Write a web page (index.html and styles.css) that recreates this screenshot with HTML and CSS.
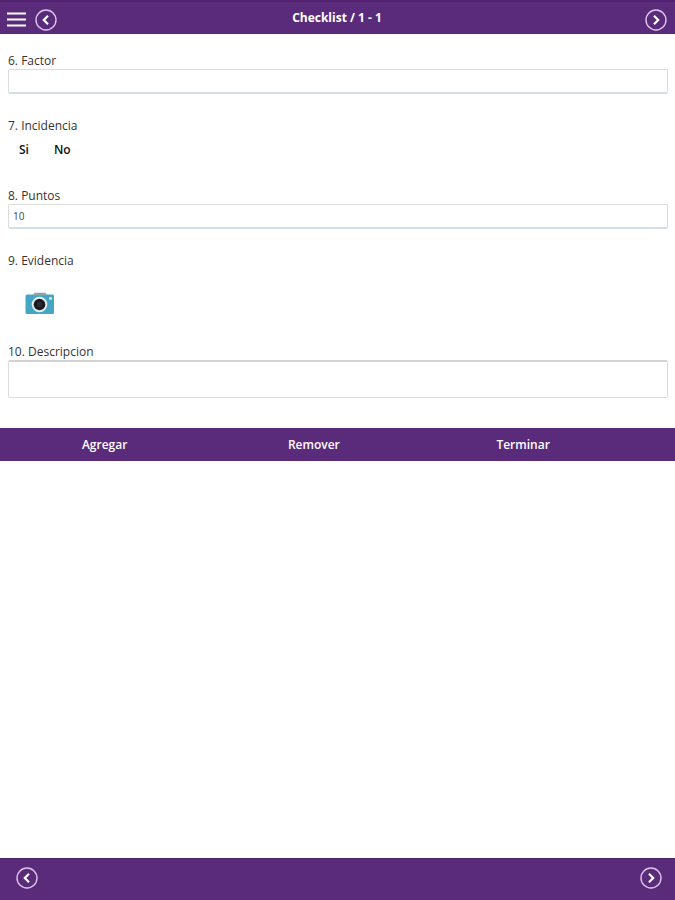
FILE: index.html
```html
<!DOCTYPE html>
<html lang="es">
<head>
  <meta charset="UTF-8">
  <meta name="viewport" content="width=device-width, initial-scale=1.0">
  <title>Checklist</title>
  <link rel="stylesheet" href="styles.css">
</head>
<body>
  <header class="topbar">
    <div class="topbar-side">
      <button type="button" class="icon-btn" aria-label="Menu">
        <svg width="20" height="22" viewBox="0 0 20 22"><path d="M0 4.5h19M0 10.5h19M0 16.5h19" stroke="#fff" stroke-width="2"/></svg>
      </button>
      <button type="button" class="icon-btn" aria-label="Anterior">
        <svg width="22" height="22" viewBox="0 0 22 22" fill="none"><circle cx="11" cy="11" r="10" stroke="#dcc4ea" stroke-width="1.4"/><path d="M13 6.8L8.8 11l4.2 4.2" stroke="#fff" stroke-width="2.2"/></svg>
      </button>
    </div>
    <h1>Checklist / 1 - 1</h1>
    <div class="topbar-side right">
      <button type="button" class="icon-btn" aria-label="Siguiente">
        <svg width="22" height="22" viewBox="0 0 22 22" fill="none"><circle cx="11" cy="11" r="10" stroke="#dcc4ea" stroke-width="1.4"/><path d="M9 6.8l4.2 4.2L9 15.2" stroke="#fff" stroke-width="2.2"/></svg>
      </button>
    </div>
  </header>

  <main>
    <form class="checklist">
      <div class="field">
        <label for="factor">6. Factor</label>
        <input type="text" id="factor">
      </div>

      <div class="field" role="group" aria-labelledby="incidencia">
        <span class="label" id="incidencia">7. Incidencia</span>
        <div class="options">
          <button type="button">Si</button>
          <button type="button">No</button>
        </div>
      </div>

      <div class="field">
        <label for="puntos">8. Puntos</label>
        <input type="text" id="puntos" value="10">
      </div>

      <div class="field" role="group" aria-labelledby="evidencia">
        <span class="label" id="evidencia">9. Evidencia</span>
        <div class="evidence">
          <button type="button" class="icon-btn" aria-label="Tomar foto">
            <svg width="30" height="23" viewBox="0 0 30 23">
              <path d="M8 4l1.5-3.2h11L22 4z" fill="#8ca39f"/>
              <rect x="0.5" y="2.5" width="28.5" height="19.5" rx="1.5" fill="#45a5c4"/>
              <path d="M9 2.5h12" stroke="#8ca39f" stroke-width="2"/>
              <circle cx="14.5" cy="12.5" r="7.8" fill="#e6eef0"/>
              <circle cx="14.5" cy="12.5" r="5.8" fill="#1c1a20"/>
              <circle cx="14.5" cy="12.5" r="2.6" fill="#2e2a30"/>
              <circle cx="25.5" cy="6.5" r="1.4" fill="#e6f4f8"/>
            </svg>
          </button>
        </div>
      </div>

      <div class="field">
        <label for="descripcion">10. Descripcion</label>
        <textarea id="descripcion"></textarea>
      </div>
    </form>

    <div class="actions">
      <button type="button">Agregar</button>
      <button type="button">Remover</button>
      <button type="button">Terminar</button>
    </div>
  </main>

  <footer class="bottombar">
    <button type="button" class="icon-btn" aria-label="Anterior">
      <svg width="22" height="22" viewBox="0 0 22 22" fill="none"><circle cx="11" cy="11" r="10" stroke="#dcc4ea" stroke-width="1.4"/><path d="M13 6.8L8.8 11l4.2 4.2" stroke="#fff" stroke-width="2.2"/></svg>
    </button>
    <button type="button" class="icon-btn" aria-label="Siguiente">
      <svg width="22" height="22" viewBox="0 0 22 22" fill="none"><circle cx="11" cy="11" r="10" stroke="#dcc4ea" stroke-width="1.4"/><path d="M9 6.8l4.2 4.2L9 15.2" stroke="#fff" stroke-width="2.2"/></svg>
    </button>
  </footer>
</body>
</html>
```
FILE: styles.css
```css
* { box-sizing: border-box; }
body { margin: 0; min-height: 100vh; display: flex; flex-direction: column; background: #fff; color: #333; font-family: "Trebuchet MS", "Open Sans", sans-serif; font-size: 12px; line-height: 17px; }
main { flex: 1; }
button { padding: 0; border: none; background: none; font: inherit; color: inherit; cursor: pointer; }
.icon-btn { display: block; }
.icon-btn svg { display: block; }

.topbar { display: grid; grid-template-columns: 1fr auto 1fr; height: 34px; padding: 0 8px 0 7px; background: #5b2b7b; border-top: 2px solid #52206f; color: #fff; }
.topbar h1 { margin: 0; font-size: 12px; font-weight: 700; line-height: 32px; }
.topbar-side { display: flex; align-items: flex-end; gap: 8px; padding-bottom: 3px; }
.topbar-side.right { justify-content: flex-end; }

.checklist { display: flex; flex-direction: column; gap: 23px; padding: 18px 7px 30px 8px; }
.field label, .field .label { display: block; }
.field input, .field textarea { display: block; width: 100%; border: 1px solid #dcdcdc; border-radius: 2px; background: #fff; color: #444; font-family: inherit; font-size: 10px; padding: 0 4px; outline: none; }
.field input { height: 25px; border-bottom: 2px solid #d3dfe6; }
.field textarea { height: 38px; border-top: 2px solid #d2d2d2; resize: none; }
.options { display: flex; gap: 25px; height: 30px; padding-left: 11px; color: #111; font-weight: 600; }
.evidence { height: 51px; padding: 23px 0 0 17px; }

.actions { display: grid; grid-template-columns: repeat(3, 1fr); height: 33px; padding-right: 7%; background: #5b2b7b; color: #fff; font-weight: 600; }

.bottombar { display: flex; justify-content: space-between; align-items: center; height: 42px; padding: 0 13px 3px 16px; background: #5b2b7b; border-top: 1px solid #4a2466; }
```
